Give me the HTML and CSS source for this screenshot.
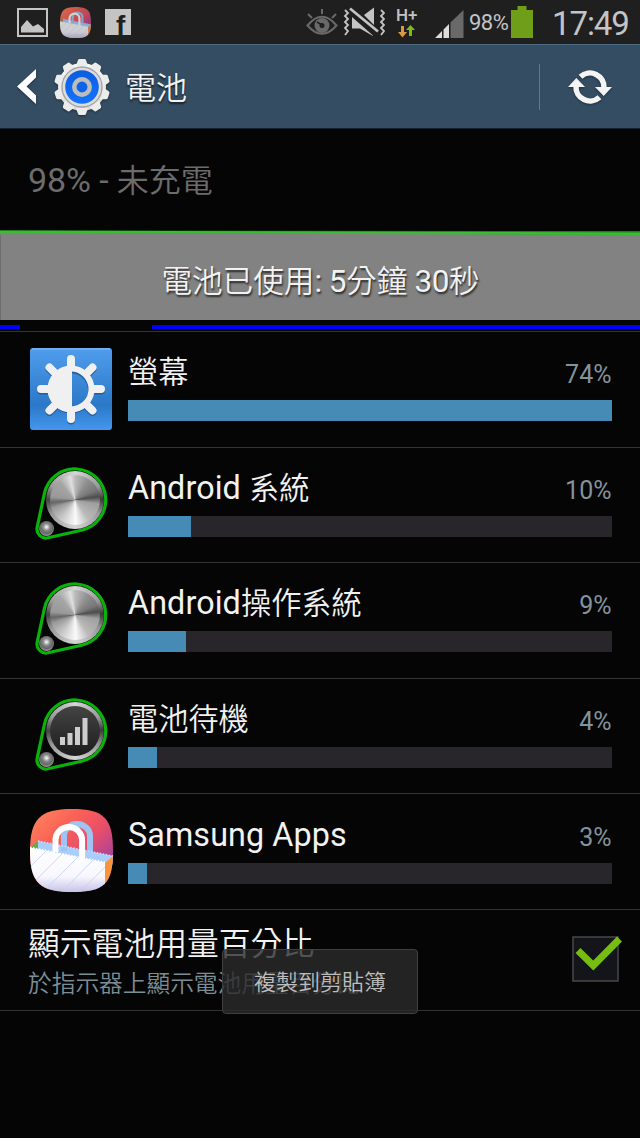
FILE: index.html
```html
<!DOCTYPE html>
<html lang="zh-Hant">
<head>
    <meta charset="UTF-8">
    <meta name="viewport" content="width=device-width, initial-scale=1.0">
    <title>電池</title>
    <link rel="stylesheet" href="styles.css">
</head>
<body>
    <!-- shared icons -->
    <svg class="defs" width="0" height="0">
        <defs>
            <linearGradient id="bagBg" x1="0" y1="0" x2="1" y2="1">
                <stop offset="0" stop-color="#ff8a5c"/>
                <stop offset=".3" stop-color="#fb6257"/>
                <stop offset=".55" stop-color="#e84e68"/>
                <stop offset=".75" stop-color="#b04596"/>
                <stop offset="1" stop-color="#8c4dc0"/>
            </linearGradient>
            <linearGradient id="bagFront" x1="0" y1="0" x2="0" y2="1">
                <stop offset="0" stop-color="#fff"/>
                <stop offset=".65" stop-color="#f8f7ff"/>
                <stop offset="1" stop-color="#c6c3e6"/>
            </linearGradient>
            <linearGradient id="gearBody" x1="0" y1="0" x2="0" y2="1">
                <stop offset="0" stop-color="#fafafa"/>
                <stop offset="1" stop-color="#d8d8d8"/>
            </linearGradient>
            <linearGradient id="gearBlue" x1="0" y1="0" x2="0" y2="1">
                <stop offset="0" stop-color="#0b5ce0"/>
                <stop offset="1" stop-color="#1474ff"/>
            </linearGradient>
            <linearGradient id="screenBg" x1="0" y1="0" x2="0" y2="1">
                <stop offset="0" stop-color="#4f9dec"/>
                <stop offset=".7" stop-color="#2c78c8"/>
                <stop offset="1" stop-color="#4497ee"/>
            </linearGradient>
            <clipPath id="bagClip">
                <path d="M42 0C74 0 83 9 83 42S74 83 42 83 0 74 0 42 10 0 42 0Z"/>
            </clipPath>
        </defs>
        <symbol id="samsung-apps" viewBox="0 0 83 83">
            <g clip-path="url(#bagClip)">
                <rect width="83" height="83" fill="url(#bagBg)"/>
                <path d="M8 32 83 47V56H8Z" fill="#a9cdfc"/>
                <path d="M34 42V27a13 12 0 0 1 26 0V43" fill="none" stroke="#9fc3f3" stroke-width="6"/>
                <path d="M0 39 8 32V42Z" fill="#62ab49"/>
                <path d="M75 54 83 47V83H75Z" fill="#f8953a"/>
                <path d="M0 38.5 75 53.5V83H0Z" fill="url(#bagFront)"/>
                <path d="M0 38.5 75 53.5" stroke="#fff" stroke-width="2" stroke-dasharray="1.5 1.5"/>
                <path d="M8 32 83 47" stroke="#c9e0ff" stroke-width="1.5" stroke-dasharray="1.5 1.5"/>
                <path d="M16 42-4 62M32 45 4 73M48 48 18 78M63 51 32 83M75 58 50 83" stroke="#bfd3f5" stroke-width=".8"/>
                <path d="M25.5 43V31a13.3 13 0 0 1 26.6 0V49" fill="none" stroke="#fff" stroke-width="6"/>
            </g>
        </symbol>
        <symbol id="knob-frame" viewBox="0 0 82 82">
            <path d="M14.4 29.5A31 31 0 1 1 51.5 66.2L18 73.8A9 9 0 0 1 7.2 63.1Z" fill="#050505" stroke="#0ab30a" stroke-width="3.2"/>
        </symbol>
    </svg>

    <div class="statusbar">
        <svg class="st-image" width="31" height="29" viewBox="0 0 31 29">
            <path d="M1 1H30V28H1Z" fill="none" stroke="#c4c4c4" stroke-width="2"/>
            <path d="M4 24.500V19L10 12 16 18.500 21 16 27 21V24.500Z" fill="#c4c4c4"/>
        </svg>
        <svg class="st-bag" width="31" height="31"><use href="#samsung-apps"/></svg>
        <svg class="st-fb" width="26" height="26" viewBox="0 0 26 26">
            <rect width="26" height="26" fill="#c4c4c4"/>
            <text x="11" y="25.500">f</text>
        </svg>
        <svg class="st-eye" width="32" height="26" viewBox="0 0 32 26">
            <g fill="none" stroke="#696969" stroke-width="2">
                <path d="M1.500 16.500Q16-1 30.500 16.500 16 33 1.500 16.500Z"/>
                <path d="M16 0V5M2 5 6 9M30 5 26 9"/>
            </g>
            <circle cx="16" cy="16.500" r="7.500" fill="#696969"/>
            <circle cx="16" cy="16.500" r="2.500" fill="#1f1f1f"/>
            <path d="M11 13 16 16" stroke="#1f1f1f" stroke-width="1.500"/>
        </svg>
        <svg class="st-mute" width="42" height="30" viewBox="0 0 42 30">
            <path d="M9 10 30 28.500V29L17 21.500H9ZM21 8 31 .5V18Z" fill="#c4c4c4"/>
            <path d="M7 1.500 35 24.500" stroke="#c4c4c4" stroke-width="2.700"/>
            <path d="M2 3 5 6 2 9 5 12 2 15 5 18 2 21 5 24 2 28M38 3 41 6 38 9 41 12 38 15 41 18 38 21 41 24 38 28" fill="none" stroke="#c4c4c4" stroke-width="1.800"/>
        </svg>
        <div class="network">
            <span>H+</span>
            <svg width="17" height="13" viewBox="0 0 17 13">
                <path d="M3 1H6V7H9L4.500 12.500 0 7H3Z" fill="#d59a42"/>
                <path d="M11 11H14V5H17L12.500 0 8 5H11Z" fill="#7bbd12"/>
            </svg>
        </div>
        <svg class="st-signal" width="29" height="28" viewBox="0 0 29 28">
            <path d="M0 28 7 21V28ZM8.500 19.500 14 14V28H8.500Z" fill="#dcdcdc"/>
            <path d="M15.500 12.500 28.500 0V28H15.500Z" fill="#696969"/>
        </svg>
        <span class="st-percent">98%</span>
        <svg class="st-battery" width="22" height="32" viewBox="0 0 22 32">
            <path d="M6.500 0H15.500V4H22V32H0V4H6.500Z" fill="#6f9e18"/>
        </svg>
        <span class="clock">17:49</span>
    </div>

    <div class="actionbar">
        <svg class="back" width="20" height="36" viewBox="0 0 20 36">
            <path d="M19 0 0 17.500 19 35V26.500L9.500 17.500 19 8.500Z" fill="#fff"/>
        </svg>
        <svg class="gear" width="58" height="58" viewBox="-29 -29 58 58">
            <circle r="20.500" fill="none" stroke="url(#gearBody)" stroke-width="7"/>
            <g fill="#ececec">
                <path id="tooth" d="M-6-21-4-27Q-3.500-28-2.500-28H2.500Q3.500-28 4-27L6-21Z"/>
                <use href="#tooth" transform="rotate(36)"/>
                <use href="#tooth" transform="rotate(72)"/>
                <use href="#tooth" transform="rotate(108)"/>
                <use href="#tooth" transform="rotate(144)"/>
                <use href="#tooth" transform="rotate(180)"/>
                <use href="#tooth" transform="rotate(216)"/>
                <use href="#tooth" transform="rotate(252)"/>
                <use href="#tooth" transform="rotate(288)"/>
                <use href="#tooth" transform="rotate(324)"/>
            </g>
            <circle r="20" fill="#dcdcdc" stroke="#a2a2a2" stroke-width="1.300"/>
            <circle r="16.800" fill="url(#gearBlue)"/>
            <circle r="7.700" fill="#0d64ea" stroke="#bdbdbd" stroke-width="4.500"/>
        </svg>
        <h1>電池</h1>
        <div class="divider"></div>
        <svg class="refresh" width="46" height="38" viewBox="-23 -19 46 38">
            <path d="M-9.500-10.200A14 14 0 0 1 14 1M9.500 10.200A14 14 0 0 1-14-1" fill="none" stroke="#f4f4f4" stroke-width="5.500"/>
            <path d="M5 0H22L13.700 9ZM-5 0H-22L-13.700-9Z" fill="#f4f4f4"/>
        </svg>
    </div>

    <div class="summary"><span class="latin">98% - </span>未充電</div>

    <div class="graph">
        <svg class="level" width="640" height="5" viewBox="0 0 640 5">
            <path d="M0 1H640V5H0Z" fill="#828282"/>
            <path d="M0 .5 640 1V4.500L0 2.800Z" fill="#078a07"/>
            <path d="M0 .5 640 2.500V5L0 3Z" fill="#3cbc35"/>
        </svg>
        <div class="graph-body">電池已使用<span class="latin">: 5</span>分鐘<span class="latin"> 30</span>秒</div>
        <svg class="wake" width="640" height="11" viewBox="0 0 640 11">
            <path d="M0 5H20V9H0ZM152 5H640V9H152Z" fill="#00f"/>
        </svg>
    </div>

    <div class="usage-list">
        <div class="item">
            <svg class="icon" width="82" height="82" viewBox="0 0 82 82">
                <rect width="82" height="82" rx="3" fill="url(#screenBg)"/>
                <path d="M2 1H80" stroke="#8cc3f8" stroke-width="1"/>
                <g fill="none" stroke="#1d4f86" transform="translate(0 1.500)" opacity=".7">
                    <circle cx="41" cy="41" r="20" stroke-width="6"/>
                    <path d="M41 18V11M41 71V64M11 41H18M64 41H71M19.500 19.500 25 25M57 57 62.500 62.500M19.500 62.500 25 57M57 25 62.500 19.500" stroke-width="8" stroke-linecap="round"/>
                </g>
                <g fill="none" stroke="#f0f0f0">
                    <circle cx="41" cy="41" r="20.500" stroke-width="6"/>
                    <path d="M41 18V11M41 71V64M11 41H18M64 41H71M19.500 19.500 25 25M57 57 62.500 62.500M19.500 62.500 25 57M57 25 62.500 19.500" stroke-width="8" stroke-linecap="round"/>
                </g>
                <path d="M42 18V64A23 23 0 0 1 42 18Z" fill="#f0f0f0"/>
            </svg>
            <div class="detail">
                <div class="label"><span>螢幕</span><span class="percent">74%</span></div>
                <div class="bar"><div class="fill" style="width: 100%"></div></div>
            </div>
        </div>
        <div class="item">
            <div class="icon knob">
                <svg width="82" height="82"><use href="#knob-frame"/></svg>
                <span class="dial"></span>
                <span class="pin"></span>
            </div>
            <div class="detail">
                <div class="label"><span><span class="latin">Android </span>系統</span><span class="percent">10%</span></div>
                <div class="bar"><div class="fill" style="width: 13.1%"></div></div>
            </div>
        </div>
        <div class="item">
            <div class="icon knob">
                <svg width="82" height="82"><use href="#knob-frame"/></svg>
                <span class="dial"></span>
                <span class="pin"></span>
            </div>
            <div class="detail">
                <div class="label"><span><span class="latin">Android</span>操作系統</span><span class="percent">9%</span></div>
                <div class="bar"><div class="fill" style="width: 12%"></div></div>
            </div>
        </div>
        <div class="item">
            <div class="icon knob">
                <svg width="82" height="82"><use href="#knob-frame"/></svg>
                <span class="dial dark">
                    <svg width="28" height="27" viewBox="0 0 28 27">
                        <path d="M0 19H5V27H0ZM7.500 15H12.500V27H7.500ZM15 9H20V27H15ZM22.500 0H27.500V27H22.500Z" fill="#cdcdcd"/>
                    </svg>
                </span>
                <span class="pin"></span>
            </div>
            <div class="detail">
                <div class="label"><span>電池待機</span><span class="percent">4%</span></div>
                <div class="bar"><div class="fill" style="width: 6%"></div></div>
            </div>
        </div>
        <div class="item">
            <svg class="icon apps" width="83" height="83"><use href="#samsung-apps"/></svg>
            <div class="detail">
                <div class="label"><span class="latin">Samsung Apps</span><span class="percent">3%</span></div>
                <div class="bar"><div class="fill" style="width: 4%"></div></div>
            </div>
        </div>
    </div>

    <div class="setting">
        <div class="setting-text">
            <div class="setting-title">顯示電池用量百分比</div>
            <div class="setting-desc">於指示器上顯示電池用量百分比</div>
        </div>
        <svg class="checkbox" width="50" height="48" viewBox="0 0 50 48">
            <rect x="1" y="2" width="45" height="44" fill="#14151a" stroke="#48484a" stroke-width="1.500"/>
            <path d="M6 15.500 21.300 30.500 47.500 4" fill="none" stroke="#76bd10" stroke-width="7"/>
        </svg>
    </div>

    <div class="toast">複製到剪貼簿</div>
</body>
</html>
```
FILE: styles.css
```css
* {
    box-sizing: border-box;
}

body {
    margin: 0;
    height: 1138px;
    overflow: hidden;
    background-color: #050505;
    color: #f2f2f2;
    font-family: Roboto, "Noto Sans CJK TC", sans-serif;
    font-weight: 350;
    position: relative;
}

svg {
    display: block;
    flex-shrink: 0;
}

.defs {
    position: absolute;
}

.latin {
    font-weight: 400;
    white-space: pre;
}

/* status bar */
.statusbar {
    height: 44px;
    padding-left: 17px;
    background-color: #1f1f1f;
    color: #c4c4c4;
    font-weight: 400;
    display: flex;
    align-items: center;
}

.st-bag {
    margin-left: 12px;
    opacity: 0.8;
}

.st-fb {
    margin-left: 14px;
    overflow: visible;
}

.st-fb text {
    font: bold 28px "Liberation Sans", sans-serif;
    fill: #1f1f1f;
}

.st-eye {
    margin-left: 175px;
}

.st-mute {
    margin-left: 5px;
}

.network {
    width: 21px;
    margin-left: 11px;
    font-size: 17px;
    font-weight: 500;
    line-height: 16px;
}

.network svg {
    margin: 2px 0 0 2px;
}

.st-signal {
    margin: 3px 0 0 18px;
}

.st-percent {
    width: 39px;
    margin-left: 5px;
    font-size: 22px;
    letter-spacing: -0.5px;
}

.st-battery {
    margin-left: 3px;
}

.clock {
    margin: 3px 0 0 19px;
    font-size: 33px;
    letter-spacing: -1.1px;
}

/* action bar */
.actionbar {
    height: 85px;
    padding-left: 17px;
    background-color: #344d63;
    border-top: 1px solid #4b6b82;
    border-bottom: 1px solid #14222e;
    display: flex;
    align-items: center;
}

.gear {
    margin-left: 16px;
    filter: drop-shadow(0 1px 1px rgba(0, 0, 0, 0.4));
}

.back,
.refresh {
    filter: drop-shadow(0 1px 1px rgba(0, 0, 0, 0.4));
}

h1 {
    flex: 1;
    margin: 0 0 3px 14px;
    font-size: 31px;
    font-weight: 350;
    text-shadow: 0 2px 2px rgba(0, 0, 0, 0.6);
}

.divider {
    width: 1px;
    height: 46px;
    background-color: #60788a;
}

.refresh {
    margin: 0 27px 0 27px;
}

/* battery summary and graph */
.summary {
    height: 101px;
    padding-left: 28px;
    line-height: 102px;
    font-size: 32px;
    color: #6c6c6c;
}

.summary .latin {
    font-size: 34px;
    letter-spacing: -0.1px;
}

.graph {
    height: 101px;
}

.graph-body {
    height: 85px;
    background-color: #828282;
    border-left: 1px solid #6e6e6e;
    text-align: center;
    font-size: 30.6px;
    line-height: 93px;
    text-shadow: 1px 2px 2px rgba(0, 0, 0, 0.7);
}

.graph-body .latin {
    font-size: 31.5px;
    letter-spacing: -0.5px;
}

/* app list */
.usage-list {
    height: 578px;
    display: flex;
    flex-direction: column;
}

.item {
    flex: 1;
    padding: 0 28.5px 0 30px;
    border-top: 1px solid #333;
    display: flex;
    align-items: center;
}

.icon {
    width: 82px;
    height: 82px;
    flex-shrink: 0;
}

.icon.apps {
    width: 83px;
    height: 83px;
    margin: 0 -1px 3px 0;
}

.detail {
    flex: 1;
    margin-left: 16px;
    padding-bottom: 12px;
}

.label {
    height: 50px;
    padding-top: 5px;
    display: flex;
    justify-content: space-between;
    align-items: center;
    font-size: 30.2px;
    line-height: 44px;
}

.label .latin {
    font-size: 32.3px;
    letter-spacing: 0.1px;
}

.percent {
    margin-top: 5px;
    font-size: 25px;
    font-weight: 400;
    color: #84929c;
}

.bar {
    height: 21px;
    margin-top: 5px;
    background-color: #28252b;
}

.fill {
    height: 100%;
    background-color: #468ab6;
}

/* metal knob icon, layers share one grid cell */
.knob {
    display: grid;
}

.knob > * {
    grid-area: 1 / 1;
}

.dial {
    width: 58px;
    height: 58px;
    margin: 7px 0 0 15.7px;
    border: 4px solid transparent;
    border-radius: 50%;
    background:
        conic-gradient(#bbb 0deg, #8e8e8e 35deg, #777 65deg, #4d4d4d 82deg, #a0a0a0 100deg, #bababa 145deg, #fafafa 178deg, #d0d0d0 210deg, #999 250deg, #666 264deg, #999 278deg, #a5a5a5 320deg, #e0e0e0 348deg, #bbb 360deg) padding-box,
        conic-gradient(#d5d5d5, #999 60deg, #3a3a3a 88deg, #999 120deg, #d5d5d5 180deg, #999 240deg, #444 270deg, #999 300deg, #d5d5d5) border-box;
}

.dial.dark {
    display: flex;
    padding: 12px 0 0 10px;
    background:
        linear-gradient(#444, #1c1c1c) padding-box,
        conic-gradient(#d5d5d5, #999 60deg, #3a3a3a 88deg, #999 120deg, #d5d5d5 180deg, #999 240deg, #444 270deg, #999 300deg, #d5d5d5) border-box;
}

.pin {
    width: 15px;
    height: 15px;
    margin: 57px 0 0 8.5px;
    border-radius: 50%;
    background: radial-gradient(circle at 50% 40%, #fff 0, #888 30%, #666 55%, #ddd 100%);
}

/* percentage setting */
.setting {
    height: 102px;
    padding: 0 18px 0 28px;
    border-top: 1px solid #333;
    border-bottom: 1px solid #333;
    display: flex;
    justify-content: space-between;
    align-items: center;
}

.setting-text {
    padding-top: 4px;
}

.setting-title {
    font-size: 31.8px;
    line-height: 44px;
}

.setting-desc {
    font-size: 23.7px;
    line-height: 36px;
    color: #7d8d96;
}

.checkbox {
    margin-bottom: 3px;
}

.toast {
    position: absolute;
    left: 222px;
    top: 949px;
    width: 196px;
    height: 65px;
    border: 1px solid #404040;
    border-radius: 4px;
    background-color: rgba(42, 42, 42, 0.8);
    color: #bdbdbd;
    font-size: 22px;
    line-height: 65px;
    text-align: center;
}
```
